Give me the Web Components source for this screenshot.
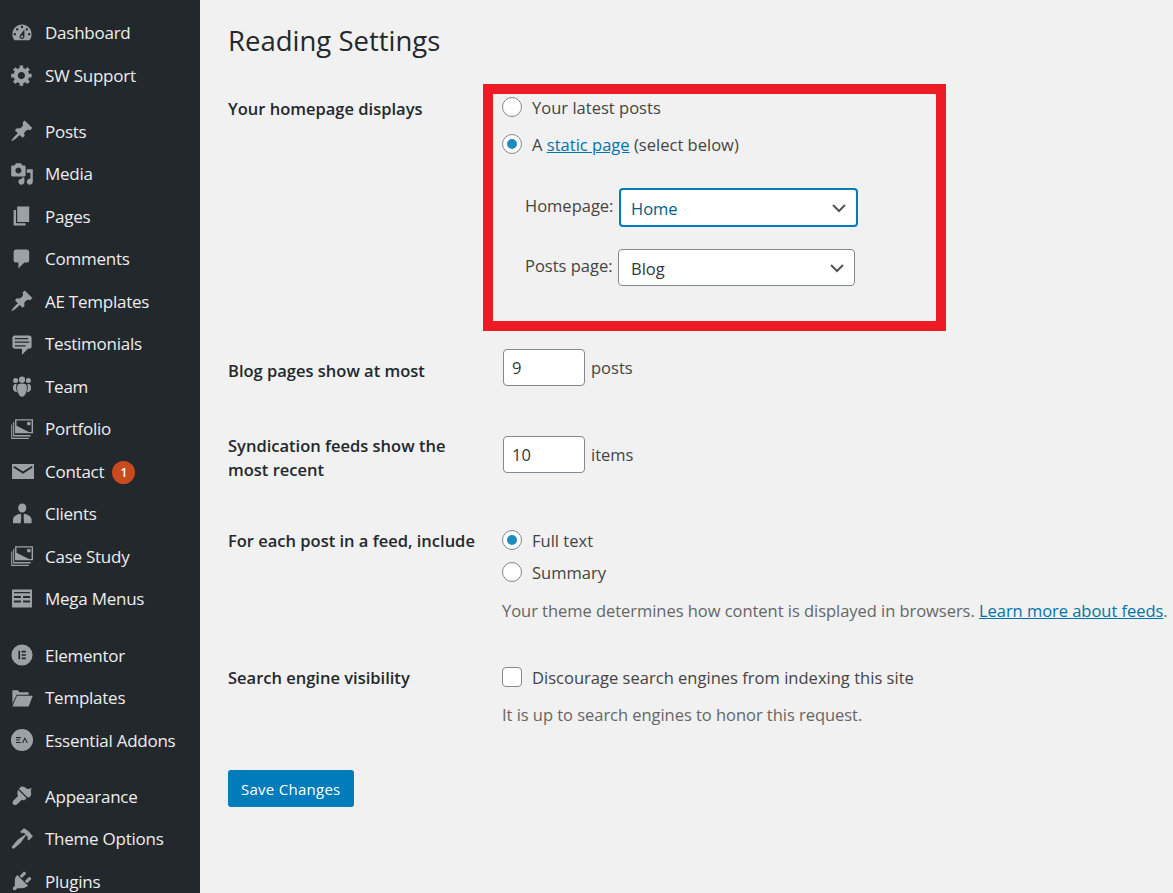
<!DOCTYPE html>
<html>
<head>
<meta charset="utf-8">
<title>Reading Settings</title>
<style>
  html, body { margin: 0; height: 893px; overflow: hidden; background: #f1f1f1; }
  body { display: flex; font-family: "Open Sans", "Liberation Sans", sans-serif; font-size: 16.5px; color: #444; }
</style>
</head>
<body>
<wp-sidebar>
  <wp-menu-item icon="dashboard">Dashboard</wp-menu-item>
  <wp-menu-item icon="gear">SW Support</wp-menu-item>
  <wp-menu-sep></wp-menu-sep>
  <wp-menu-item icon="pin">Posts</wp-menu-item>
  <wp-menu-item icon="media">Media</wp-menu-item>
  <wp-menu-item icon="page">Pages</wp-menu-item>
  <wp-menu-item icon="comment">Comments</wp-menu-item>
  <wp-menu-item icon="pin">AE Templates</wp-menu-item>
  <wp-menu-item icon="testimonial">Testimonials</wp-menu-item>
  <wp-menu-item icon="groups">Team</wp-menu-item>
  <wp-menu-item icon="images">Portfolio</wp-menu-item>
  <wp-menu-item icon="email" badge="1">Contact</wp-menu-item>
  <wp-menu-item icon="businessman">Clients</wp-menu-item>
  <wp-menu-item icon="images">Case Study</wp-menu-item>
  <wp-menu-item icon="table">Mega Menus</wp-menu-item>
  <wp-menu-sep size="13.75"></wp-menu-sep>
  <wp-menu-item icon="elementor">Elementor</wp-menu-item>
  <wp-menu-item icon="folder">Templates</wp-menu-item>
  <wp-menu-item icon="ea">Essential Addons</wp-menu-item>
  <wp-menu-sep size="13.75"></wp-menu-sep>
  <wp-menu-item icon="brush">Appearance</wp-menu-item>
  <wp-menu-item icon="hammer">Theme Options</wp-menu-item>
  <wp-menu-item icon="plugin">Plugins</wp-menu-item>
</wp-sidebar>

<wp-settings-page heading="Reading Settings">
  <wp-row label="Your homepage displays" top="36">
    <red-frame>
      <wp-choice type="radio">Your latest posts</wp-choice>
      <wp-choice type="radio" checked gap="17">A <wp-link>static page</wp-link> (select below)</wp-choice>
      <wp-select label="Homepage:" value="Home" focused></wp-select>
      <wp-select label="Posts page:" value="Blog"></wp-select>
    </red-frame>
  </wp-row>
  <wp-row label="Blog pages show at most" top="63" label-top="10">
    <wp-number value="9" unit="posts"></wp-number>
  </wp-row>
  <wp-row label="Syndication feeds show the&lt;br&gt;most recent" top="50" label-top="-2">
    <wp-number value="10" unit="items"></wp-number>
  </wp-row>
  <wp-row label="For each post in a feed, include" top="48" label-top="-1">
    <wp-choice type="radio" checked>Full text</wp-choice>
    <wp-choice type="radio" gap="12">Summary</wp-choice>
    <wp-help gap="17">Your theme determines how content is displayed in browsers. <wp-link>Learn more about feeds</wp-link>.</wp-help>
  </wp-row>
  <wp-row label="Search engine visibility" top="44" label-top="-1">
    <wp-choice type="checkbox">Discourage search engines from indexing this site</wp-choice>
    <wp-help>It is up to search engines to honor this request.</wp-help>
  </wp-row>
  <wp-button>Save Changes</wp-button>
</wp-settings-page>

<script>
const ICONS = {
  dashboard: '<path d="M3.76 16h12.48c1.100-1.370 1.760-3.110 1.760-5 0-4.420-3.580-8-8-8s-8 3.580-8 8c0 1.890.66 3.630 1.760 5zM10 4c.55 0 1 .45 1 1s-.45 1-1 1-1-.45-1-1 .45-1 1-1zM6 6c.55 0 1 .45 1 1s-.45 1-1 1-1-.45-1-1 .45-1 1-1zm8 0c.55 0 1 .45 1 1s-.45 1-1 1-1-.45-1-1 .45-1 1-1zm-5.370 5.550L12 7v6c0 1.100-.9 2-2 2s-2-.9-2-2c0-.57.24-1.080.63-1.450zM4 10c.55 0 1 .45 1 1s-.45 1-1 1-1-.45-1-1 .45-1 1-1zm12 0c.55 0 1 .45 1 1s-.45 1-1 1-1-.45-1-1 .45-1 1-1zm-5 3c0-.55-.45-1-1-1s-1 .45-1 1 .45 1 1 1 1-.45 1-1z" fill-rule="evenodd"/>',
  gear: '<path d="M18 12h-2.180c-.17.7-.44 1.350-.81 1.930l1.540 1.540-2.100 2.100-1.540-1.540c-.58.36-1.230.63-1.910.79V19H8v-2.180c-.68-.16-1.330-.43-1.910-.79l-1.540 1.540-2.120-2.120 1.540-1.540c-.36-.58-.63-1.230-.79-1.910H1V9.030h2.170c.16-.7.44-1.350.8-1.940L2.430 5.550l2.100-2.100 1.540 1.540c.58-.37 1.240-.64 1.930-.81V2h3v2.180c.68.16 1.330.43 1.910.79l1.540-1.540 2.120 2.120-1.540 1.540c.36.59.64 1.240.8 1.940H18V12zm-8.500 1.500c1.660 0 3-1.340 3-3s-1.340-3-3-3-3 1.340-3 3 1.340 3 3 3z" fill-rule="evenodd"/>',
  pin: '<path d="M10.440 3.020l1.820-1.820 6.360 6.350-1.830 1.820c-1.050-.68-2.480-.57-3.410.36l-.75.75c-.92.93-1.040 2.350-.35 3.410l-1.830 1.820-2.410-2.410-2.800 2.790c-.42.42-3.380 2.710-3.800 2.290s1.860-3.390 2.280-3.810l2.790-2.790L4.100 9.360l1.830-1.820c1.050.69 2.480.57 3.400-.36l.75-.75c.93-.92 1.050-2.350.36-3.410z"/>',
  media: '<path d="M13 11V4c0-.55-.45-1-1-1h-1.670L9 1H5L3.670 3H2c-.55 0-1 .45-1 1v7c0 .55.45 1 1 1h10c.55 0 1-.45 1-1zM7 4.500c1.380 0 2.500 1.120 2.500 2.500S8.380 9.500 7 9.500 4.500 8.380 4.500 7 5.620 4.500 7 4.500zM14 6h5v10.500c0 1.380-1.120 2.500-2.500 2.500S14 17.880 14 16.500s1.120-2.500 2.500-2.500c.17 0 .34.02.5.05V9h-3V6zm-4 8.050V13h2v3.500c0 1.380-1.120 2.500-2.500 2.500S7 17.880 7 16.500 8.120 14 9.500 14c.17 0 .34.02.5.05z" fill-rule="evenodd"/>',
  page: '<path d="M6 15V2h10v13H6zm-1 1h8v2H3V5h2v11z"/>',
  comment: '<path d="M5 2h9c1.100 0 2 .9 2 2v7c0 1.100-.9 2-2 2h-2l-5 5v-5H5c-1.100 0-2-.9-2-2V4c0-1.100.9-2 2-2z"/>',
  testimonial: '<path d="M4 3h12c.55 0 1.020.2 1.410.59S18 4.450 18 5v7c0 .55-.2 1.020-.59 1.410S16.550 14 16 14h-1l-5 5v-5H4c-.55 0-1.020-.2-1.410-.59S2 12.550 2 12V5c0-.55.2-1.020.59-1.410S3.450 3 4 3zm11 2H4v1h11V5zm1 3H4v1h12V8zm-3 3H4v1h9v-1z" fill-rule="evenodd"/>',
  groups: '<circle cx="10" cy="4.700" r="2.600"/><circle cx="4.700" cy="5.500" r="2.100"/><circle cx="15.300" cy="5.500" r="2.100"/><path d="M10 7.900c2 0 3.700.6 3.900 1.800.3 1.800.1 4.200-.5 5.700-.5 1.500-1.700 3.600-3.400 3.600s-2.900-2.100-3.400-3.600c-.6-1.500-.8-3.900-.5-5.700.2-1.200 1.900-1.800 3.900-1.800z"/><path d="M5.500 8.300c-.5 1.700-.4 4.700.5 7-1.500-.2-2.800-.9-3.200-2-.5-1.300-.4-2.900.1-3.900.4-.9 1.500-1.300 2.600-1.100zM14.500 8.300c.5 1.700.4 4.700-.5 7 1.500-.2 2.800-.9 3.200-2 .5-1.300.4-2.900-.1-3.900-.4-.9-1.500-1.300-2.600-1.100z"/>',
  images: '<path d="M4.200 1.800h15v11.800h-15zM5.400 3v4.200l10.400 5.200h2.200V3z" fill-rule="evenodd"/><path d="M15.700 3.900a1.600 1.600 0 1 1 0 3.200 1.600 1.600 0 0 1 0-3.200z"/><path d="M2.600 4.200h.9v10.900h13.700v1.200H2.600zM1 6.200h.9v11h13.800v1.200H1z"/>',
  email: '<path d="M1.700 4.200H20v12.500H1.700zM3.600 5.800L2.700 7.100l8.100 5.100 8.100-5.100-.9-1.300-7.200 4.600z" fill-rule="evenodd"/>',
  businessman: '<path d="M10.200 1.200c2 0 3.400 1.500 3.400 3.600 0 2-1.400 4-3.400 4S6.800 6.800 6.800 4.800c0-2.100 1.400-3.600 3.400-3.600zM8.500 9.800l1 1.100-.7 1h.6l-.4 5.900H3c-.3 0-.5-.3-.5-.6v-2.400c0-2.700 2.900-4.300 6-5zM11.900 9.800c3.100.7 6.100 2.300 6.100 5v2.400c0 .3-.2.600-.5.6H11.700l-.4-5.900h.6l-.7-1z"/>',
  table: '<path d="M1.700 2h16.600v15H1.700zM3.300 4.100v1.200h13.400V4.100zM3.300 7.500v1.700h5.800V7.500zM10.900 7.500v1.700h5.800V7.500zM3.300 11.300V13h5.800v-1.700zM10.900 11.300V13h5.800v-1.700z" fill-rule="evenodd"/>',
  elementor: '<path d="M10 1.200a8.800 8.800 0 1 1 0 17.600 8.800 8.800 0 0 1 0-17.600zM7 6.500v7h1.400v-7zM9.700 6.500v1.400h3.500V6.500zM9.700 9.300v1.400h3.500V9.300zM9.700 12.100v1.400h3.500v-1.400z" fill-rule="evenodd"/>',
  folder: '<path d="M2 3.500h4.500L8 5.200h7.500v2H5.500L2 14.800zM5.800 8.200H19l-3.500 8.800H2z"/>',
  ea: '<path d="M10 .8a9.200 9.200 0 1 1 0 18.400A9.200 9.200 0 0 1 10 .8zM5 7.600v.9h4v-.9zM5 9.600v.9h3.200v-.9zM5 11.600v.9h4v-.9zM12.400 7.400l-2.500 5.100h1l1.500-3.100 1.500 3.100h1z" fill-rule="evenodd"/>',
  brush: '<path d="M14.500 11.100L7.400 4l1.500-1.500c.6-.6 2.300-.5 3.500.3 1.200.8 1.400 1.300 2.700 1.300s1.900-.5 3.100-.7c-.5 1-.9 1.600-.8 2.800.1 1.100.5 1.600.2 2.800-.3 1.100-1.200 1.800-1.800 2.300zM6.700 4.700l7.100 7.100-2 2-2-.7-3.800 3.800c-.9.900-2.400.9-3.200.1-.9-.9-.8-2.400.1-3.300l3.800-3.800-.7-1.900z"/>',
  hammer: '<path d="M17.700 6.320l1.410 1.420-3.470 3.410-1.420-1.420.84-.82c-.32-.76-.81-1.570-1.510-2.310l-4.610 6.590-5.240 4.530c-.5.43-1.270.4-1.740-.07-.48-.48-.5-1.250-.06-1.760l4.530-5.240 6.590-4.610c-.74-.7-1.550-1.190-2.310-1.510l-.82.84-1.420-1.420L11.600 1c2.100 1 5.300 3.200 6.100 5.320z"/>',
  plugin: '<path d="M13.110 4.360L9.870 7.600 8 5.730l3.240-3.240c.35-.34 1.050-.2 1.560.32.52.51.66 1.210.31 1.550zm-8 1.770l.91-1.120 9.010 9.010-1.190.84c-.71.71-2.630 1.160-3.820 1.160H6.140L4.900 17.260c-.59.59-1.540.59-2.120 0-.59-.58-.59-1.530 0-2.120l1.240-1.240v-3.880c0-1.130.4-3.050 1.090-3.890zm7.260 3.970l3.240-3.240c.34-.35 1.040-.21 1.550.31.52.51.66 1.210.31 1.550l-3.240 3.250z"/>'
};

// small helper, every element here is the same shape: shadow + html string
class ShadowEl extends HTMLElement {
  constructor() {
    super();
    this.attachShadow({ mode: 'open' });
  }
  connectedCallback() {
    this.shadowRoot.innerHTML = this.markup();
  }
}

class WpSidebar extends ShadowEl {
  markup() {
    return `<style>
      :host { display: block; flex: 0 0 200px; width: 200px; height: 893px; overflow: hidden; background: #23282d; padding-top: 11.5px; box-sizing: border-box; }
    </style><slot></slot>`;
  }
}

class WpMenuSep extends ShadowEl {
  markup() {
    return `<style>:host { display: block; height: ${this.getAttribute('size') || 13.5}px; }</style>`;
  }
}

class WpMenuItem extends ShadowEl {
  markup() {
    const badge = this.getAttribute('badge');
    return `<style>
      :host { display: flex; align-items: center; height: 42.5px; color: #eee; font-size: 17px; letter-spacing: -0.25px; }
      svg { width: 24px; height: 24px; margin-left: 10px; margin-right: 11px; fill: #9ca1a6; flex: none; }
      .badge { margin-left: 8px; margin-top: 3px; width: 23px; height: 23px; border-radius: 50%; background: #ca4a1f; color: #fff; font-size: 12px; font-weight: 600; display: flex; align-items: center; justify-content: center; letter-spacing: 0; }
    </style>
    <svg viewBox="0 0 20 20">${ICONS[this.getAttribute('icon')] || ''}</svg>
    <slot></slot>
    ${badge ? `<span class="badge">${badge}</span>` : ''}`;
  }
}

class WpSettingsPage extends ShadowEl {
  markup() {
    return `<style>
      :host { display: block; flex: 1; min-width: 0; padding: 0 0 0 28px; }
      h1 { margin: 0; padding-top: 21px; font-size: 27.5px; line-height: 40px; font-weight: 400; color: #23282d; }
      ::slotted(wp-button) { margin-top: 43px; }
    </style>
    <h1>${this.getAttribute('heading')}</h1>
    <slot></slot>`;
  }
}

class WpRow extends ShadowEl {
  markup() {
    const top = this.getAttribute('top') || 0;
    const labelTop = this.getAttribute('label-top') || 0;
    return `<style>
      :host { display: grid; grid-template-columns: 275px 1fr; margin-top: ${top}px; }
      .label { font-weight: 600; color: #23282d; line-height: 24px; font-size: 16.5px; letter-spacing: 0; margin-top: ${labelTop}px; }
      .field { min-width: 0; }
    </style>
    <div class="label">${this.getAttribute('label')}</div>
    <div class="field"><slot></slot></div>`;
  }
}

// the red annotation drawn round the first row in the screenshot
class RedFrame extends ShadowEl {
  markup() {
    return `<style>
      :host { display: block; position: relative; }
      .frame { position: absolute; left: -20px; top: -13px; width: 463px; height: 247px; border: 10px solid #ed1c24; box-sizing: border-box; pointer-events: none; }
    </style>
    <slot></slot><div class="frame"></div>`;
  }
}

class WpChoice extends ShadowEl {
  markup() {
    const checkbox = this.getAttribute('type') === 'checkbox';
    const gap = this.getAttribute('gap') || 0;
    return `<style>
      :host { display: flex; align-items: center; height: 20px; margin-top: ${gap}px; margin-left: -1px; letter-spacing: 0.02px; white-space: nowrap; }
      .box { width: 20px; height: 20px; box-sizing: border-box; border: 1px solid #7e8993; background: #fff; margin-right: 10px; flex: none; display: flex; align-items: center; justify-content: center; border-radius: ${checkbox ? '4px' : '50%'}; }
      .dot { width: 10px; height: 10px; border-radius: 50%; background: #1e8cbe; }
    </style>
    <span class="box">${this.hasAttribute('checked') ? '<span class="dot"></span>' : ''}</span>
    <span><slot></slot></span>`;
  }
}

class WpLink extends ShadowEl {
  markup() {
    return `<style>:host { color: #0073aa; text-decoration: underline; }</style><slot></slot>`;
  }
}

class WpSelect extends ShadowEl {
  markup() {
    const focused = this.hasAttribute('focused');
    return `<style>
      :host { display: flex; align-items: center; margin-left: 22px; margin-top: ${focused ? 34 : 22}px; }
      .lab { width: 93px; flex: none; margin-top: -5px; white-space: nowrap; }
      .box { width: ${focused ? 239 : 237}px; height: ${focused ? 39 : 37}px; box-sizing: border-box; display: flex; align-items: center; justify-content: space-between; background: #fff; border-radius: 4px;
        border: ${focused ? '2px solid #007cba' : '1px solid #7e8993'}; color: ${focused ? '#016087' : '#32373c'}; padding: 0 9px 0 ${focused ? 10 : 12}px; margin-left: ${focused ? 1 : 0}px; }
      .val { padding-top: 2px; }
      svg { width: 16px; height: 16px; fill: none; stroke: #555; stroke-width: 2; }
    </style>
    <span class="lab">${this.getAttribute('label')}</span>
    <div class="box"><span class="val">${this.getAttribute('value')}</span><svg viewBox="0 0 16 16"><path d="M2 5l6 6 6-6"/></svg></div>`;
  }
}

class WpNumber extends ShadowEl {
  markup() {
    return `<style>
      :host { display: flex; align-items: center; height: 37px; }
      .box { width: 82px; height: 37px; box-sizing: border-box; border: 1px solid #7e8993; border-radius: 4px; background: #fff; color: #32373c; padding-left: 8px; display: flex; align-items: center; }
      .unit { margin-left: 6px; margin-top: -1px; }
    </style>
    <div class="box">${this.getAttribute('value')}</div><span class="unit">${this.getAttribute('unit')}</span>`;
  }
}

class WpHelp extends ShadowEl {
  markup() {
    return `<style>
      :host { display: block; margin-top: ${this.getAttribute('gap') || 16}px; margin-left: -1px; color: #666; line-height: 24px; white-space: nowrap; letter-spacing: -0.04px; }
    </style><slot></slot>`;
  }
}

class WpButton extends ShadowEl {
  markup() {
    return `<style>
      :host { display: inline-flex; align-items: center; height: 37px; padding: 0 13px; background: #007cba; border-radius: 3px; color: #fff; font-size: 15px; letter-spacing: 0.27px; }
    </style><slot></slot>`;
  }
}

customElements.define('wp-sidebar', WpSidebar);
customElements.define('wp-menu-sep', WpMenuSep);
customElements.define('wp-menu-item', WpMenuItem);
customElements.define('wp-settings-page', WpSettingsPage);
customElements.define('wp-row', WpRow);
customElements.define('red-frame', RedFrame);
customElements.define('wp-choice', WpChoice);
customElements.define('wp-link', WpLink);
customElements.define('wp-select', WpSelect);
customElements.define('wp-number', WpNumber);
customElements.define('wp-help', WpHelp);
customElements.define('wp-button', WpButton);
</script>
</body>
</html>
